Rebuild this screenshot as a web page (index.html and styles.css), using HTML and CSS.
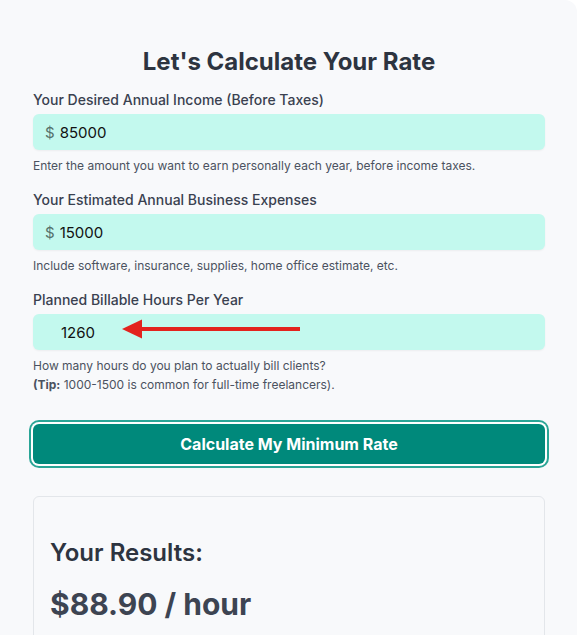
FILE: index.html
```html
<!DOCTYPE html>
<html lang="en">
<head>
<meta charset="utf-8">
<title>Rate Calculator</title>
<link rel="stylesheet" href="styles.css">
</head>
<body>
<main class="card">
  <h1 class="title">Let's Calculate Your Rate</h1>

  <div class="field">
    <label class="label" for="income">Your Desired Annual Income (Before Taxes)</label>
    <div class="input-box">
      <span class="prefix">$</span>
      <input class="input" id="income" type="text" value="85000">
    </div>
    <p class="help">Enter the amount you want to earn personally each year, before income taxes.</p>
  </div>

  <div class="field">
    <label class="label" for="expenses">Your Estimated Annual Business Expenses</label>
    <div class="input-box">
      <span class="prefix">$</span>
      <input class="input" id="expenses" type="text" value="15000">
    </div>
    <p class="help">Include software, insurance, supplies, home office estimate, etc.</p>
  </div>

  <div class="field">
    <label class="label" for="hours">Planned Billable Hours Per Year</label>
    <div class="input-box input-box--plain">
      <input class="input" id="hours" type="text" value="1260">
      <svg class="arrow" width="180" height="22" viewBox="0 0 180 22" aria-hidden="true">
        <rect x="18" y="9" width="160" height="4" fill="#e3231e"/>
        <polygon points="0,11 20,1.5 20,20.5" fill="#e3231e"/>
      </svg>
    </div>
    <p class="help">How many hours do you plan to actually bill clients?<br><strong>(Tip:</strong> 1000-1500 is common for full-time freelancers).</p>
  </div>

  <button class="btn" type="button">Calculate My Minimum Rate</button>

  <section class="results">
    <h2 class="results-title">Your Results:</h2>
    <p class="rate">$88.90 / hour</p>
  </section>
</main>
</body>
</html>
```

FILE: styles.css
```css
html, body {
  margin: 0;
  padding: 0;
  background: #ffffff;
}

body {
  font-family: Inter, "Noto Sans", sans-serif;
  color: #374151;
}

.card {
  box-sizing: border-box;
  width: 589px;
  margin-left: -12px;
  background: #f8f9fb;
  border-radius: 12px;
  padding: 46px 32px 40px 45px;
  min-height: 700px;
}

.title {
  margin: 0 0 12px;
  text-align: center;
  font-size: 24px;
  line-height: 32px;
  font-weight: 700;
  color: #2d3440;
}

.field {
  margin-bottom: 15px;
}

.label {
  display: block;
  font-size: 14px;
  line-height: 20px;
  font-weight: 500;
  color: #3a4150;
  margin-bottom: 4px;
}

.input-box {
  position: relative;
  display: flex;
  align-items: center;
  height: 36px;
  padding: 0 12px;
  background: #c3f9ee;
  border-radius: 6px;
  box-shadow: 0 1px 2px rgba(0, 0, 0, 0.05);
}

.input-box--plain {
  padding-left: 28px;
}

.prefix {
  font-size: 15px;
  color: #55716b;
  margin-right: 5px;
}

.input {
  flex: 1;
  min-width: 0;
  border: 0;
  outline: 0;
  background: transparent;
  padding: 0;
  font-family: Inter, "Noto Sans", sans-serif;
  font-size: 15px;
  color: #111111;
}

.arrow {
  position: absolute;
  left: 89px;
  top: 4px;
}

.help {
  margin: 6px 0 0;
  font-size: 12px;
  line-height: 19px;
  color: #4b5260;
}

.help strong {
  font-weight: 700;
}

.btn {
  display: block;
  width: 100%;
  height: 40px;
  margin-top: 30px;
  border: 0;
  border-radius: 6px;
  background: #00897b;
  color: #ffffff;
  font-family: Inter, "Noto Sans", sans-serif;
  font-size: 16px;
  font-weight: 700;
  box-shadow: 0 0 0 2px #ffffff, 0 0 0 4px #2aa596;
}

.results {
  margin-top: 32px;
  border: 1px solid #e3e6ea;
  border-radius: 6px;
  padding: 40px 16px 30px;
}

.results-title {
  margin: 0 0 16px;
  font-size: 24px;
  line-height: 32px;
  font-weight: 600;
  color: #2d3440;
}

.rate {
  margin: 0;
  font-size: 30px;
  line-height: 38px;
  font-weight: 700;
  color: #3d4452;
}
```
